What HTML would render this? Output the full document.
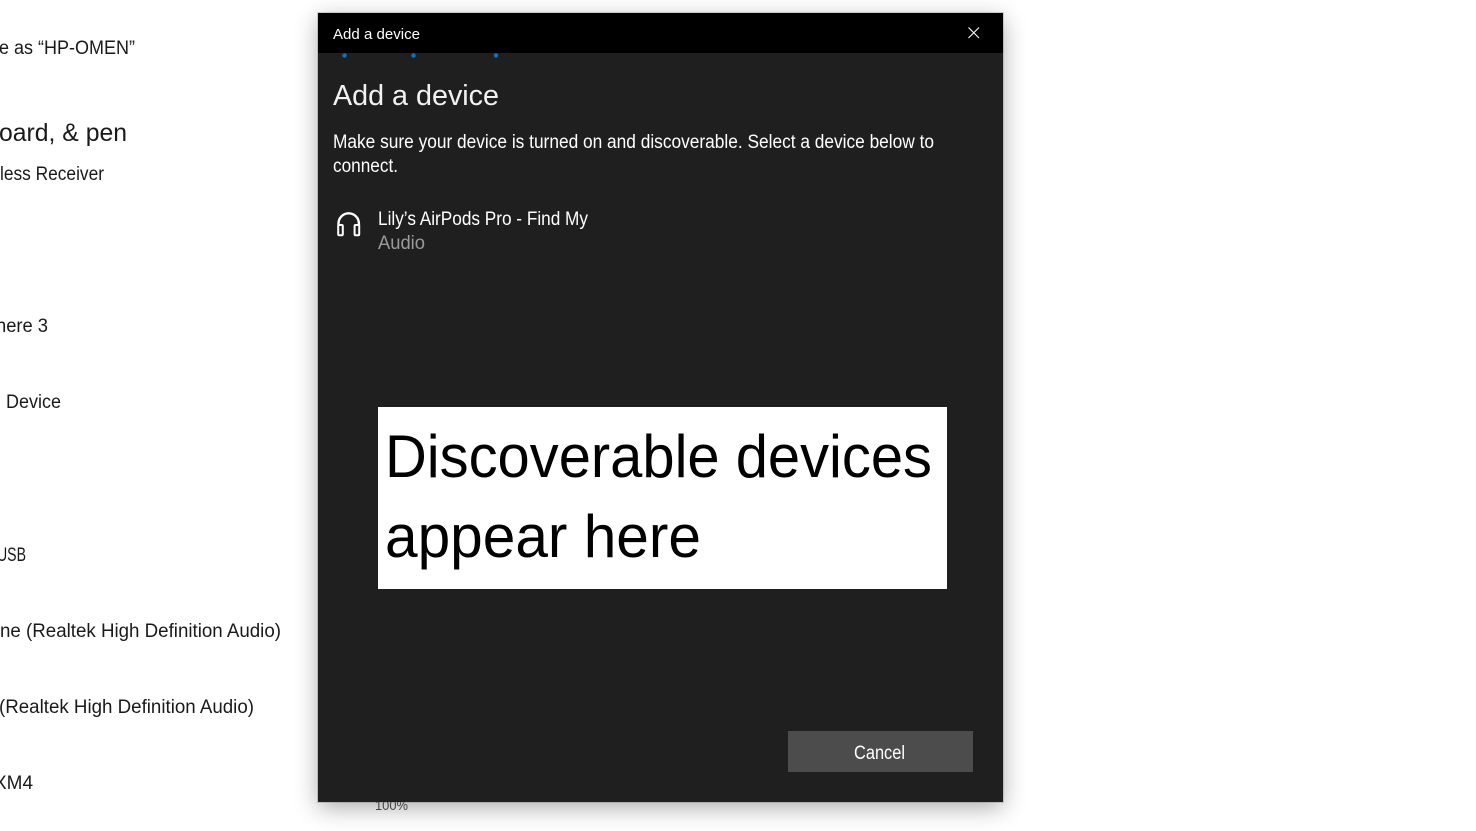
<!DOCTYPE html>
<html><head><meta charset="utf-8"><style>
html,body{margin:0;padding:0;width:1476px;height:831px;overflow:hidden;background:#fff}
svg{position:absolute;left:0;top:0;display:block}
text{font-family:"Liberation Sans",sans-serif;white-space:pre}
.d{position:absolute;left:318px;top:13px;width:685px;height:789px;background:#1f1f1f;box-shadow:0 0 0 1px #6a6a6a44,0 6px 22px rgba(0,0,0,.32)}
</style></head><body>
<svg width="1476" height="831" viewBox="0 0 1476 831" style="z-index:0">
<g fill="#1a1a1a" font-size="19">
<text x="-1" y="54" textLength="136" lengthAdjust="spacingAndGlyphs">e as “HP-OMEN”</text>
<text x="-1" y="141" font-size="25" textLength="128" lengthAdjust="spacingAndGlyphs">oard, &amp; pen</text>
<text x="0" y="180" textLength="104" lengthAdjust="spacingAndGlyphs">less Receiver</text>
<text x="-4" y="332" textLength="52" lengthAdjust="spacingAndGlyphs">here 3</text>
<text x="6" y="408" textLength="55" lengthAdjust="spacingAndGlyphs">Device</text>
<text x="-3" y="561" textLength="29" lengthAdjust="spacingAndGlyphs">USB</text>
<text x="0" y="637" textLength="281" lengthAdjust="spacingAndGlyphs">ne (Realtek High Definition Audio)</text>
<text x="-1" y="713" textLength="255" lengthAdjust="spacingAndGlyphs">(Realtek High Definition Audio)</text>
<text x="-6" y="789" textLength="39" lengthAdjust="spacingAndGlyphs">XM4</text>
<text x="375" y="810" font-size="14" fill="#555" textLength="33" lengthAdjust="spacingAndGlyphs">100%</text>
</g>
</svg>
<div class="d"></div>
<svg width="1476" height="831" viewBox="0 0 1476 831" style="z-index:1">
<rect x="318" y="13" width="685" height="40" fill="#000"/>
<text x="333" y="39" font-size="15" fill="#fff" textLength="87" lengthAdjust="spacingAndGlyphs">Add a device</text>
<path d="M968.5 27.5l10.5 10.5M979 27.5l-10.5 10.5" stroke="#fff" stroke-width="1.1" fill="none"/>
<circle cx="344.5" cy="55.5" r="2.2" fill="#0a74c9"/>
<circle cx="413.5" cy="55.5" r="2.2" fill="#0a74c9"/>
<circle cx="496" cy="55.5" r="2.2" fill="#0a74c9"/>
<text x="333" y="105" font-size="29" fill="#f2f2f2" textLength="166" lengthAdjust="spacingAndGlyphs">Add a device</text>
<text x="333" y="148" font-size="19" fill="#fff" textLength="601" lengthAdjust="spacingAndGlyphs">Make sure your device is turned on and discoverable. Select a device below to</text>
<text x="333" y="172" font-size="19" fill="#fff" textLength="65" lengthAdjust="spacingAndGlyphs">connect.</text>
<path d="M338.5 226v-2.5a10.2 10.2 0 0 1 20.4 0V226" fill="none" stroke="#fff" stroke-width="2.4"/>
<rect x="338.2" y="225" width="4.6" height="10.2" rx="1" fill="none" stroke="#fff" stroke-width="2"/>
<rect x="354.6" y="225" width="4.6" height="10.2" rx="1" fill="none" stroke="#fff" stroke-width="2"/>
<text x="378" y="225" font-size="19" fill="#fff" textLength="210" lengthAdjust="spacingAndGlyphs">Lily’s AirPods Pro - Find My</text>
<text x="378" y="249" font-size="19" fill="#9a9a9a" textLength="47" lengthAdjust="spacingAndGlyphs">Audio</text>
<rect x="378" y="407" width="569" height="182" fill="#fff"/>
<text x="385" y="477" font-size="60" fill="#000" textLength="547" lengthAdjust="spacingAndGlyphs">Discoverable devices</text>
<text x="385" y="557" font-size="60" fill="#000" textLength="316" lengthAdjust="spacingAndGlyphs">appear here</text>
<rect x="788" y="731" width="185" height="41" fill="#4c4c4c"/>
<text x="854" y="759" font-size="19" fill="#fff" textLength="51" lengthAdjust="spacingAndGlyphs">Cancel</text>
</svg>
</body></html>
